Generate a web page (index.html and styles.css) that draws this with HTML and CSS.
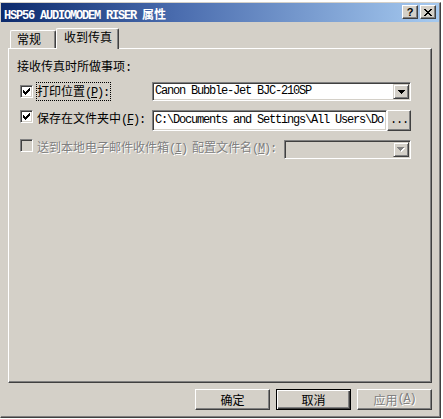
FILE: index.html
```html
<!DOCTYPE html>
<html lang="zh-CN">
<head>
<meta charset="utf-8">
<title>HSP56 AUDIOMODEM RISER 属性</title>
<link rel="stylesheet" href="styles.css">
</head>
<body>
<div class="win">
  <div class="title">
    <span class="title-text"><span class="m">HSP56 AUDIOMODEM RISER </span>属性</span>
    <div class="caps">
      <div class="capbtn q">?</div>
      <div class="capbtn"><svg width="8" height="7" viewBox="0 0 8 7" shape-rendering="crispEdges"><path fill="#000" d="M0 0h2v1h-2z M6 0h2v1h-2z M1 1h2v1h-2z M5 1h2v1h-2z M2 2h4v1h-4z M3 3h2v1h-2z M2 4h4v1h-4z M1 5h2v1h-2z M5 5h2v1h-2z M0 6h2v1h-2z M6 6h2v1h-2z"/></svg></div>
    </div>
  </div>
  <div class="body">
    <div class="tabs">
      <div class="tab t1">常规</div>
      <div class="tab sel">收到传真</div>
    </div>
    <div class="panel">
      <div class="heading">接收传真时所做事项<span class="m">:</span></div>

      <div class="row r1">
        <div class="left">
          <span class="chk c1"><svg width="11" height="11" viewBox="0 0 11 11" shape-rendering="crispEdges"><path fill="#000" d="M2 4h1v3h-1z M3 5h1v3h-1z M4 6h1v3h-1z M5 5h1v3h-1z M6 4h1v3h-1z M7 3h1v3h-1z M8 2h1v3h-1z"/></svg></span>
          <span class="lbl focus">打印位置<span class="m">(<u>P</u>):</span></span>
        </div>
        <div class="sunken combo">
          <span class="val m">Canon Bubble-Jet BJC-210SP</span>
          <span class="ddbtn"><svg width="7" height="4" viewBox="0 0 7 4" shape-rendering="crispEdges"><path fill="#000" d="M0 0h7v1h-7z M1 1h5v1h-5z M2 2h3v1h-3z M3 3h1v1h-1z"/></svg></span>
        </div>
      </div>

      <div class="row r2">
        <div class="left">
          <span class="chk"><svg width="11" height="11" viewBox="0 0 11 11" shape-rendering="crispEdges"><path fill="#000" d="M2 4h1v3h-1z M3 5h1v3h-1z M4 6h1v3h-1z M5 5h1v3h-1z M6 4h1v3h-1z M7 3h1v3h-1z M8 2h1v3h-1z"/></svg></span>
          <span class="lbl">保存在文件夹中<span class="m">(<u>F</u>):</span></span>
        </div>
        <div class="sunken field"><span class="val m">C:\Documents and Settings\All Users\Do</span></div>
        <div class="pbtn browse"><span class="m">...</span></div>
      </div>

      <div class="row r3">
        <span class="chk dis"></span>
        <span class="lbl gray">送到本地电子邮件收件箱<span class="m">(<u>I</u>)</span></span>
        <span class="lbl gray l2">配置文件名<span class="m">(<u>M</u>):</span></span>
        <div class="sunken combo dcombo">
          <span class="val"></span>
          <span class="ddbtn"><svg width="8" height="5" viewBox="0 0 8 5" shape-rendering="crispEdges"><path fill="#fff" d="M1 1h7v1h-7z M2 2h5v1h-5z M3 3h3v1h-3z M4 4h1v1h-1z"/><path fill="#808080" d="M0 0h7v1h-7z M1 1h5v1h-5z M2 2h3v1h-3z M3 3h1v1h-1z"/></svg></span>
        </div>
      </div>
    </div>
    <div class="buttons">
      <div class="pbtn dlg">确定</div>
      <div class="pbtn dlg def">取消</div>
      <div class="pbtn dlg gray">应用<span class="m">(<u>A</u>)</span></div>
    </div>
  </div>
</div>
</body>
</html>
```

FILE: styles.css
```css
* { box-sizing: border-box; }

body {
  margin: 0;
  background: #ffffff;
  font-family: "Noto Sans CJK SC", sans-serif;
  font-size: 12px;
  color: #000;
}

.m {
  font-family: "Liberation Mono", "Noto Sans CJK SC", monospace;
  letter-spacing: -1.2px;
}

.win {
  width: 441px;
  height: 416px;
  margin-top: 2px;
  background: #d4d0c8;
  border-top: 1px solid #d4d0c8;
  border-left: 1px solid #d4d0c8;
  border-right: 1px solid #404040;
  border-bottom: 1px solid #404040;
  box-shadow: inset -1px -1px 0 #808080;
  padding: 0 1px 1px 0;
  display: flex;
  flex-direction: column;
}

/* caption */
.title {
  height: 19px;
  flex: none;
  background: linear-gradient(90deg, #0c2a6c 0%, #4a6cae 40%, #a6caf0 100%);
  display: flex;
  align-items: flex-start;
  padding: 0 3px;
  color: #fff;
}
.title-text {
  flex: 1;
  font-weight: bold;
  line-height: 19px;
  padding-top: 1px;
  white-space: pre;
}
.caps {
  display: flex;
  gap: 2px;
  margin-top: 2px;
}
.capbtn {
  width: 16px;
  height: 14px;
  background: #d4d0c8;
  border: 1px solid;
  border-color: #fff #404040 #404040 #fff;
  box-shadow: inset -1px -1px 0 #808080;
  display: flex;
  align-items: center;
  justify-content: center;
}
.capbtn.q {
  font: bold 11px/1 "Liberation Sans", sans-serif;
  color: #000;
  padding-top: 1px;
}

/* body */
.body {
  flex: 1;
  padding: 6px 7px 6px 7px;
  display: flex;
  flex-direction: column;
}

.tabs {
  height: 20px;
  display: flex;
  align-items: flex-end;
  padding-left: 2px;
  position: relative;
  z-index: 1;
}
.tab {
  height: 18px;
  background: #d4d0c8;
  border-top: 1px solid #fff;
  border-left: 1px solid #fff;
  border-right: 1px solid #404040;
  box-shadow: inset -1px 0 0 #808080;
  border-radius: 2px 2px 0 0;
  line-height: 14px;
  padding: 1px 0 0 6px;
}
.t1 { width: 46px; }
.tab.sel {
  width: 63px;
  height: 21px;
  margin-bottom: -1px;
  padding: 1px 0 0 7px;
}

.panel {
  height: 335px;
  flex: none;
  background: #d4d0c8;
  border: 1px solid;
  border-color: #fff #404040 #404040 #fff;
  box-shadow: inset -1px -1px 0 #808080;
  padding: 10px 20px 0 11px;
}

.heading {
  line-height: 14px;
  margin-left: -3px;
}

.row {
  display: flex;
  align-items: flex-start;
}
.r1 { margin-top: 7px; height: 19px; }
.r2 { margin-top: 9px; height: 21px; }
.r3 { margin-top: 8px; height: 19px; }

.left {
  width: 132px;
  flex: none;
  display: flex;
  align-items: flex-start;
}

.chk {
  width: 13px;
  height: 13px;
  flex: none;
  display: flex;
  background: #fff;
  border: 1px solid;
  border-color: #808080 #fff #fff #808080;
  box-shadow: inset 1px 1px 0 #404040, inset -1px -1px 0 #d4d0c8;
  margin-right: 3px;
}
.chk.c1 { margin-top: 3px; }
.chk.dis { background: #d4d0c8; }

.lbl {
  line-height: 14px;
  border: 1px solid transparent;
  white-space: nowrap;
}
.lbl.focus {
  border: 1px dotted #000;
  padding: 1px 1px 0 0;
}
.r3 .lbl { margin-top: 0; }
.lbl.l2 { margin-left: 3px; }

.gray {
  color: #808080;
  text-shadow: 1px 1px 0 #fff;
}

.sunken {
  background: #fff;
  border: 1px solid;
  border-color: #808080 #fff #fff #808080;
  box-shadow: inset 1px 1px 0 #404040, inset -1px -1px 0 #d4d0c8;
  padding: 1px;
}

.combo {
  width: 259px;
  height: 19px;
  flex: none;
  display: flex;
}
.combo .val {
  flex: 1;
  padding-left: 1px;
  line-height: 15px;
  white-space: pre;
}
.ddbtn {
  width: 16px;
  flex: none;
  background: #d4d0c8;
  border: 1px solid;
  border-color: #d4d0c8 #404040 #404040 #d4d0c8;
  box-shadow: inset 1px 1px 0 #fff, inset -1px -1px 0 #808080;
  display: flex;
  align-items: center;
  justify-content: center;
}

.dcombo {
  width: 127px;
  margin-left: auto;
  margin-top: 1px;
  background: #d4d0c8;
}

.field {
  width: 235px;
  height: 21px;
  flex: none;
}
.field .val {
  display: block;
  padding-left: 1px;
  line-height: 17px;
  white-space: pre;
}

.pbtn {
  background: #d4d0c8;
  border: 1px solid;
  border-color: #fff #404040 #404040 #fff;
  box-shadow: inset -1px -1px 0 #808080;
  display: flex;
  align-items: center;
  justify-content: center;
}
.browse {
  width: 24px;
  height: 21px;
  flex: none;
  line-height: 17px;
}

.buttons {
  display: flex;
  justify-content: flex-end;
  gap: 6px;
  margin-top: 6px;
}
.dlg {
  width: 75px;
  height: 21px;
  line-height: 19px;
}
.dlg.def {
  border: 1px solid #000;
  box-shadow: inset 1px 1px 0 #fff, inset -1px -1px 0 #404040, inset -2px -2px 0 #808080;
}
```
